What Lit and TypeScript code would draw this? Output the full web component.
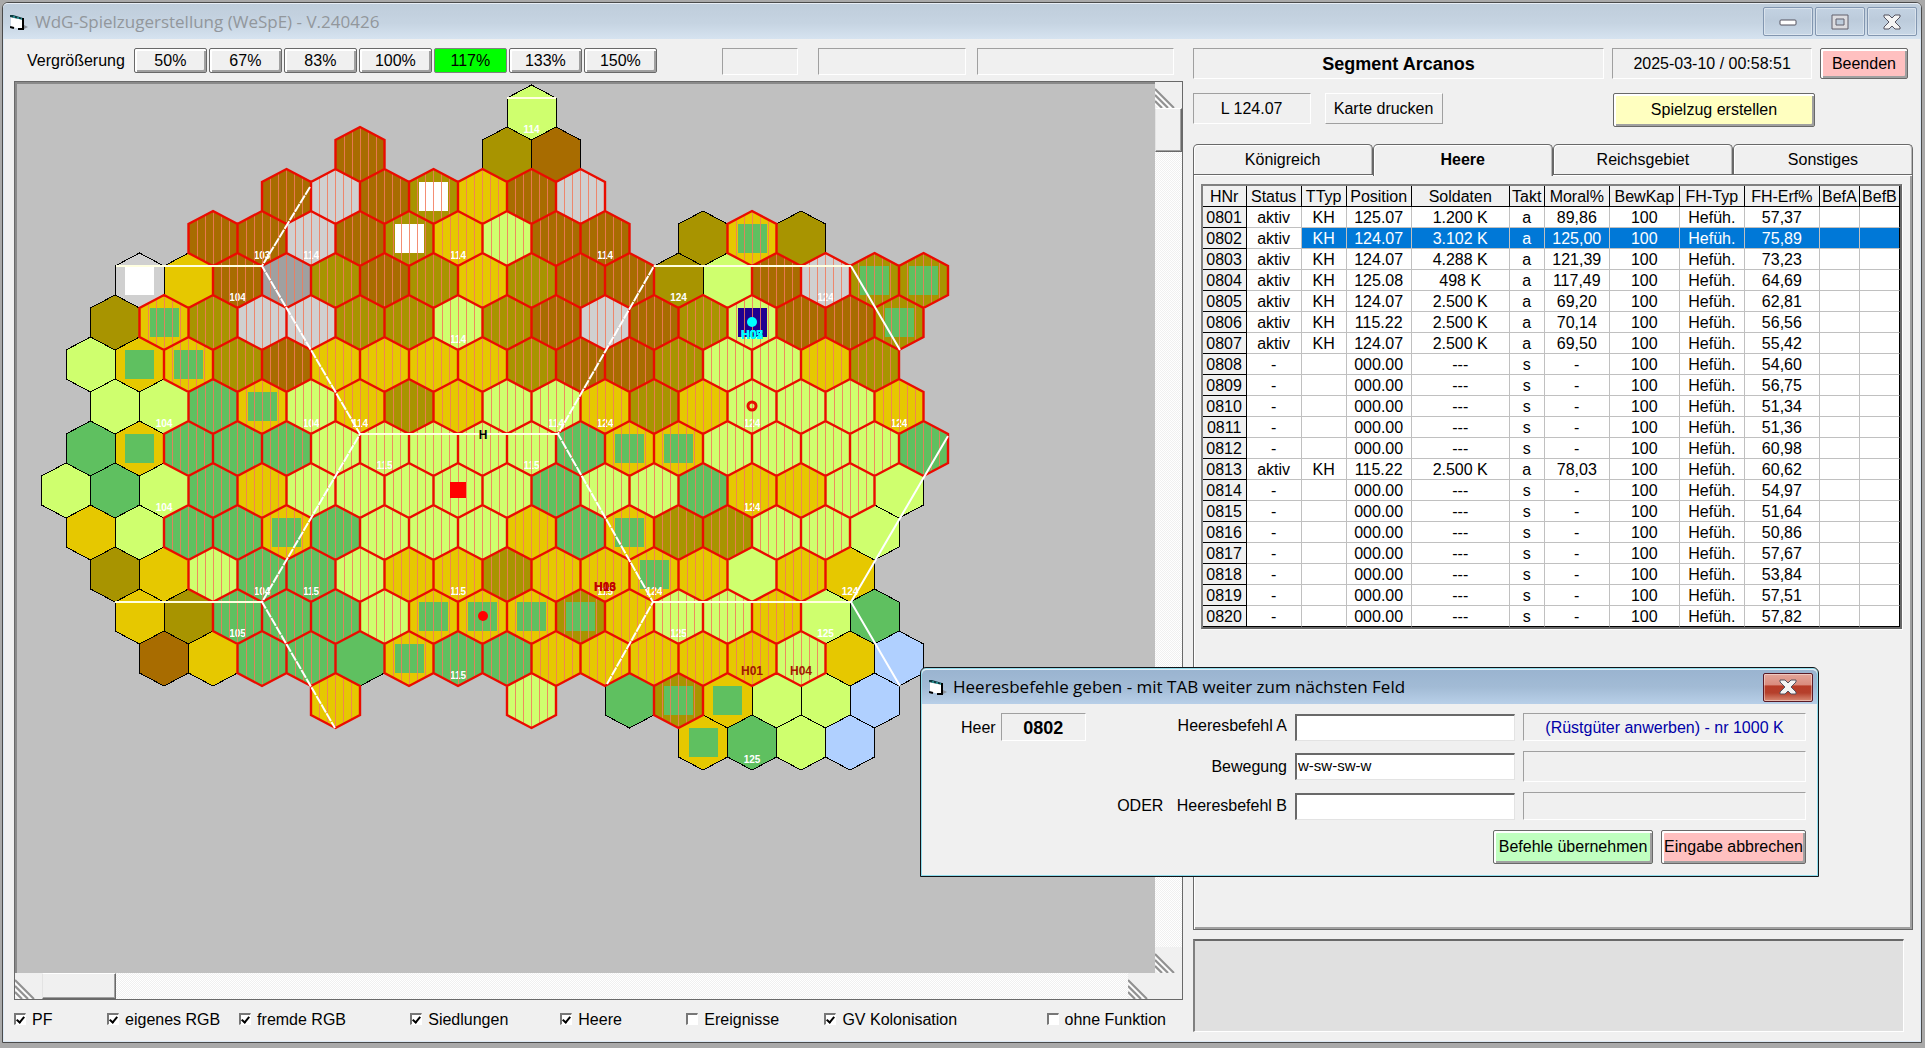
import { LitElement, html, css, svg, nothing } from "lit";
import { customElement, state } from "lit/decorators.js";
import { classMap } from "lit/directives/class-map.js";

/* ---------- shared look of the classic desktop controls ---------- */

const controls = css`
  * {
    box-sizing: border-box;
  }
  button,
  input {
    font: inherit;
    color: inherit;
    margin: 0;
  }
  .btn {
    border: 1px solid #696969;
    border-radius: 2px;
    background: #f0f0f0;
    box-shadow: inset 2px 2px 0 #fff, inset -2px -2px 0 #a0a0a0;
    padding: 0;
    text-align: center;
    white-space: nowrap;
  }
  .btn.on {
    background: #00ff00;
    box-shadow: none;
    border-color: #808080;
    padding-top: 1px;
  }
  .btn.red {
    background: #ffc0c0;
  }
  .btn.yellow {
    background: #ffffc0;
  }
  .btn.green {
    background: #c0ffc0;
  }
  .panel {
    display: flex;
    align-items: center;
    justify-content: center;
    border: 1px solid;
    border-color: #a0a0a0 #fff #fff #a0a0a0;
    white-space: nowrap;
  }
  .caption {
    width: 50px;
    height: 29px;
    padding: 0;
    border: 1px solid #8296b0;
    border-radius: 2px;
    background: linear-gradient(#c3d2e2, #bccbdb 45%, #c8d7e6);
    box-shadow: inset 0 0 0 1px rgba(255, 255, 255, 0.4);
    display: flex;
    align-items: center;
    justify-content: center;
  }
  .caption.close {
    border-color: #5a1a26;
    background: linear-gradient(#e3a69a, #d98a7c 42%, #b83c28 43%, #b5402c 70%, #d98a74);
  }
  .titletext {
    font-family: "Open Sans", "Noto Sans", sans-serif;
    font-size: 17px;
    font-weight: 400;
    margin: 0;
    white-space: nowrap;
  }
`;

const formIcon = svg`
  <svg width="18" height="16" viewBox="0 0 18 16" aria-hidden="true">
    <path d="M1 2 L4 2 L14 5 L14 15 L11 15 L1 13 Z" fill="#fff"/>
    <path d="M0 1 L3 1 L13 4 V6 L9 5 L4 4 L0 3 Z" fill="#0c3b40"/>
    <path d="M3 3 H5 M7 4 H9 M11 5 H12" stroke="#40d0d0" stroke-width="1"/>
    <path d="M13 4 V15 M0 13 L4 14 M8 15 H14" stroke="#000" stroke-width="2" fill="none"/>
    <path d="M14 11 L18 13 L14 15 Z" fill="#8a9098"/>
  </svg>`;

const crossIcon = svg`
  <svg width="20" height="18" viewBox="0 0 20 18" aria-hidden="true">
    <path d="M2 2 H7 L10 5 L13 2 H18 V4 L13 9 L18 14 V16 H13 L10 13 L7 16 H2 V14 L7 9 L2 4 Z"
      fill="#f4f4f4" stroke="#55535f" stroke-width="1"/>
  </svg>`;

/* ---------- map ---------- */

const TERRAIN: Record<string, string> = {
  b: "#a86c00",
  o: "#a89400",
  y: "#e6c800",
  l: "#cfff6e",
  g: "#5fc060",
  s: "#d0d0d0",
  d: "#a0a0a0",
  w: "#b0d0ff",
};

/* One line per row: "column terrain marker", capital terrain = own territory.
   Markers: + forest settlement, = white, # capital. */
const ROWS = [
  "19l",
  "12B 18o 20b",
  "9B 11S 13B 15O= 17Y 19B 21S",
  "6B 8B 10S 12B 14O= 16Y 18L 20B 22B 26o 28Y+ 30o",
  "3s= 5y 7B 9D 11O 13B 15O 17Y 19O 21B 23B 25o 27l 29B 31S 33O+ 35O+",
  "2o 4Y+ 6O 8S 10S 12O 14O 16L 18O 20B 22S 24B 26O 28L# 30B 32B 34O+",
  "1l 3y+ 5Y+ 7O 9B 11Y 13Y 15Y 17Y 19O 21B 23B 25O 27L 29L 31Y 33O",
  "2l 4l 6G 8Y+ 10L 12Y 14O 16Y 18L 20L 22Y 24O 26Y 28L 30L 32L 34Y",
  "1g 3y+ 5G 7G 9G 11L 13L 15L 17L 19L 21G 23Y+ 25Y+ 27L 29L 31L 33L 35G",
  "0l 2g 4l 6G 8Y 10L 12L 14L 16L 18L 20G 22L 24L 26G 28Y 30Y 32L 34l",
  "1y 3l 5G 7G 9Y+ 11G 13L 15L 17L 19Y 21G 23Y+ 25O 27O 29L 31L 33l",
  "2o 4y 6L 8G 10G 12L 14Y 16Y 18O 20Y 22Y 24Y+ 26Y 28l 30Y 32y",
  "3y 5o 7G 9G 11G 13L 15Y+ 17Y+ 19Y+ 21O+ 23Y 25L 27L 29Y 31l 33g",
  "4b 6y 8G 10G 12g 14Y+ 16G 18G 20Y 22Y 24Y 26Y 28Y 30L 32y 34w",
  "11Y 19L 23g 25O+ 27y+ 29l 31l 33w",
  "26y+ 28g 30l 32w",
];

const LABELS: [number, number, string][] = [
  [0, 19, "114"], [3, 8, "103"], [3, 10, "114"], [3, 16, "114"], [3, 22, "114"],
  [4, 7, "104"], [4, 25, "124"], [4, 31, "124"], [5, 16, "114"],
  [7, 4, "104"], [7, 10, "104"], [7, 12, "114"], [7, 20, "114"], [7, 22, "124"],
  [7, 28, "124"], [7, 34, "124"], [8, 13, "115"], [8, 19, "115"],
  [9, 4, "104"], [9, 28, "124"],
  [11, 8, "104"], [11, 10, "115"], [11, 16, "115"], [11, 22, "115"], [11, 24, "124"], [11, 32, "124"],
  [12, 7, "105"], [12, 25, "125"], [12, 31, "125"], [13, 16, "115"], [15, 28, "125"],
];

const ARMIES: [number, number, string, string][] = [
  [11, 22, "H06", "#c00000"], [11, 22, "H13", "#c00000"],
  [13, 28, "H01", "#a01800"], [13, 30, "H04", "#a01800"],
  [5, 28, "H02", "#00ffff"], [5, 28, "H03", "#00ffff"], [5, 28, "H05", "#00ffff"], [5, 28, "H07", "#00ffff"],
];

const cxOf = (h: number) => 66 + 24.5 * h;
const cyOf = (r: number) => 112 + 42 * r;

interface Hex {
  x: number;
  y: number;
  fill: string;
  own: boolean;
  mark: string;
}

const HEXES: Hex[] = ROWS.flatMap((line, r) =>
  line.split(" ").map((cell) => {
    const [, col, t, mark] = /^(\d+)([a-zA-Z])(.?)$/.exec(cell)!;
    return {
      x: cxOf(Number(col)),
      y: cyOf(r),
      fill: TERRAIN[t.toLowerCase()],
      own: t !== t.toLowerCase(),
      mark,
    };
  })
);

const outline = ({ x, y }: Hex) =>
  `M${x} ${y - 27}L${x + 24.5} ${y - 14}V${y + 15}L${x} ${y + 28}L${x - 24.5} ${y + 15}V${y - 14}Z`;

const MARKS: Record<string, string> = { "+": "#5fc060", "=": "#ffffff", "#": "#200090" };

@customElement("hex-map")
class HexMap extends LitElement {
  static styles = css`
    :host {
      display: block;
      overflow: hidden;
      background: #c0c0c0;
      min-width: 0;
      min-height: 0;
      contain: size;
    }
    svg {
      display: block;
    }
    text {
      font-family: "Liberation Sans", Arial, sans-serif;
      font-weight: 700;
      text-anchor: middle;
    }
    .seg {
      font-size: 10px;
      fill: #fff;
    }
    .army {
      font-size: 12px;
    }
  `;

  render() {
    const own = HEXES.filter((h) => h.own);
    const other = HEXES.filter((h) => !h.own);
    return html`
      <svg width="960" height="760" viewBox="17 84 960 760" role="img" aria-label="Karte">
        <g shape-rendering="crispEdges">
          ${HEXES.map((h) => svg`<path d=${outline(h)} fill=${h.fill}/>`)}
          ${HEXES.filter((h) => h.mark).map(
            (h) => svg`<rect x=${Math.floor(h.x) - 14} y=${h.y - 14} width="29" height="29" fill=${MARKS[h.mark]}/>`
          )}
        </g>
        ${LABELS.map(([r, c, t]) => svg`<text class="seg" x=${cxOf(c)} y=${cyOf(r) + 21}>${t}</text>`)}
        <g fill="none">
          <path
            d=${own
              .map((h) =>
                [-16, -8, 0, 8, 16]
                  .map((o) => {
                    const cut = Math.round(Math.abs(o) * 0.53);
                    return `M${Math.floor(h.x) + o + 0.5} ${h.y - 27 + cut}V${h.y + 28 - cut}`;
                  })
                  .join("")
              )
              .join("")}
            stroke="#f27a5c"
            stroke-opacity="0.85"
          />
          <path d=${other.map(outline).join("")} stroke="#000" shape-rendering="crispEdges" />
          <path d=${own.map(outline).join("")} stroke="#ea0c00" stroke-width="2.4" />
        </g>
        <g fill="none" stroke="#fff" stroke-width="2">
          <path
            d="M507 98H556 M116 266H262 M654 266H851 M360 434H558 M115 602H262 M653 602H851"
            stroke="#ffffe0"
          />
          <path d="M310 187L262 266L360 434L262 602L335 728" stroke-dasharray="9 1" />
          <path d="M607 684L653 602L558 434L654 266" stroke-dasharray="9 1" />
          <path d="M851 266L900 350 M948 436L851 602L900 686" />
        </g>
        <text class="army" x="483" y="439">H</text>
        <rect x="450" y="482" width="16" height="16" fill="#f00" />
        <circle cx="483" cy="616" r="5" fill="#f00" />
        <circle cx="752" cy="406" r="4" fill="none" stroke="#e61000" stroke-width="3" />
        <circle cx="752" cy="322" r="5" fill="#0ff" />
        ${ARMIES.map(
          ([r, c, t, f]) => svg`<text class="army" x=${cxOf(c)} y=${cyOf(r) + 17} fill=${f}>${t}</text>`
        )}
      </svg>
    `;
  }
}

/* ---------- army table ---------- */

const HEAD = ["HNr", "Status", "TTyp", "Position", "Soldaten", "Takt", "Moral%", "BewKap", "FH-Typ", "FH-Erf%", "BefA", "BefB"];
const WIDTHS = [44, 55, 45, 65, 98, 35, 65, 70, 65, 75, 40, 40];

const ACTIVE: Record<string, string[]> = {
  "0801": ["125.07", "1.200 K", "89,86"],
  "0802": ["124.07", "3.102 K", "125,00"],
  "0803": ["124.07", "4.288 K", "121,39"],
  "0804": ["125.08", "498 K", "117,49"],
  "0805": ["124.07", "2.500 K", "69,20"],
  "0806": ["115.22", "2.500 K", "70,14"],
  "0807": ["124.07", "2.500 K", "69,50"],
  "0813": ["115.22", "2.500 K", "78,03"],
};
const EXPERIENCE = [
  "57,37", "75,89", "73,23", "64,69", "62,81", "56,56", "55,42", "54,60", "56,75", "51,34",
  "51,36", "60,98", "60,62", "54,97", "51,64", "50,86", "57,67", "53,84", "57,51", "57,82",
];
const ARMY_ROWS = EXPERIENCE.map((erf, i) => {
  const nr = "08" + String(i + 1).padStart(2, "0");
  const a = ACTIVE[nr];
  return a
    ? [nr, "aktiv", "KH", a[0], a[1], "a", a[2], "100", "Hefüh.", erf, "", ""]
    : [nr, "-", "", "000.00", "---", "s", "-", "100", "Hefüh.", erf, "", ""];
});

@customElement("army-table")
class ArmyTable extends LitElement {
  @state() private selected = "0802";

  static styles = css`
    :host {
      display: block;
      border: 2px solid;
      border-color: #808080 #696969 #696969 #808080;
      box-shadow: 1px 1px 0 #fff;
    }
    table {
      width: 100%;
      table-layout: fixed;
      border-collapse: separate;
      border-spacing: 0;
      background: #fff;
    }
    th,
    td {
      box-sizing: border-box;
      height: 21px;
      padding: 2px 0 0;
      line-height: 18px;
      text-align: center;
      font-weight: 400;
      white-space: nowrap;
      border-right: 1px solid #c0c0c0;
      border-bottom: 1px solid #c0c0c0;
    }
    th {
      background: #f0f0f0;
      border-color: #000;
    }
    tr:last-child td {
      border-bottom-color: #000;
    }
    td:last-child {
      border-right-color: #000;
    }
    .sel td {
      background: #0078d7;
      color: #fff;
    }
    .sel td.status {
      background: #fff;
      color: #000;
    }
  `;

  render() {
    return html`
      <table>
        <colgroup>
          ${WIDTHS.map((w) => html`<col style="width:${(w / 697) * 100}%" />`)}
        </colgroup>
        <thead>
          <tr>
            ${HEAD.map((h) => html`<th scope="col">${h}</th>`)}
          </tr>
        </thead>
        <tbody>
          ${ARMY_ROWS.map(
            (row) => html`<tr
              class=${classMap({ sel: row[0] === this.selected })}
              @click=${() => (this.selected = row[0])}
            >
              ${row.map((c, i) =>
                i === 0
                  ? html`<th scope="row">${c}</th>`
                  : html`<td class=${i === 1 ? "status" : ""}>${c}</td>`
              )}
            </tr>`
          )}
        </tbody>
      </table>
    `;
  }
}

/* ---------- order dialog ---------- */

@customElement("order-dialog")
class OrderDialog extends LitElement {
  static styles = [
    controls,
    css`
      :host {
        display: block;
        border: 1px solid #101418;
        border-radius: 6px 6px 0 0;
        background: #f0f0f0;
        box-shadow: inset 0 0 0 1px #8fdcec;
        padding: 1px;
      }
      header {
        display: flex;
        align-items: center;
        gap: 6px;
        height: 35px;
        padding: 0 4px 0 7px;
        border-radius: 5px 5px 0 0;
        border-top: 1px solid #e4eef8;
        background: linear-gradient(#9ab4d0, #a2bbd5 50%, #b8cfe8);
      }
      .titletext {
        flex: 1;
        font-size: 17px;
      }
      form {
        display: grid;
        grid-template-columns: auto 85px 1fr 220px 291px;
        grid-template-rows: 28px 31px 28px;
        row-gap: 10px;
        padding: 9px 11px 11px 39px;
        align-items: center;
      }
      .who {
        margin-right: 5px;
        padding-top: 2px;
      }
      .nr {
        height: 28px;
        font-size: 18px;
        font-weight: 700;
        padding-top: 2px;
      }
      .name {
        grid-column: 3;
        justify-self: end;
        padding-right: 8px;
        white-space: pre;
      }
      .name.a {
        padding-bottom: 2px;
      }
      .text {
        grid-column: 4;
        width: 100%;
        height: 27px;
        border: 2px solid;
        border-color: #696969 #e3e3e3 #e3e3e3 #696969;
        border-width: 2px 1px 1px 2px;
        background: #fff;
        padding: 0 1px 3px;
        font-size: 15px;
        outline: none;
        border-radius: 0;
      }
      .hint {
        align-self: stretch;
        margin-left: 8px;
        padding-top: 1px;
        color: #0000a8;
      }
      .actions {
        grid-column: 1 / -1;
        display: flex;
        justify-content: flex-end;
        gap: 8px;
      }
      .actions .btn {
        height: 34px;
      }
      .ok {
        width: 160px;
      }
      .cancel {
        width: 145px;
      }
    `,
  ];

  render() {
    return html`
      <header>
        ${formIcon}
        <h2 class="titletext">Heeresbefehle geben - mit TAB weiter zum nächsten Feld</h2>
        <button class="caption close" aria-label="Schließen">${crossIcon}</button>
      </header>
      <form @submit=${(e: Event) => e.preventDefault()}>
        <span class="who">Heer</span>
        <span class="panel nr">0802</span>
        <label class="name a" for="a">Heeresbefehl A</label>
        <input class="text" id="a" type="text" />
        <span class="panel hint">(Rüstgüter anwerben) - nr 1000 K</span>
        <label class="name" for="m">Bewegung</label>
        <input class="text" id="m" type="text" .value=${"w-sw-sw-w"} />
        <span class="panel hint"></span>
        <label class="name" for="b">ODER&nbsp; &nbsp;Heeresbefehl B</label>
        <input class="text" id="b" type="text" />
        <span class="panel hint"></span>
        <div class="actions">
          <button class="btn green ok">Befehle übernehmen</button>
          <button class="btn red cancel" type="button">Eingabe abbrechen</button>
        </div>
      </form>
    `;
  }
}

/* ---------- main window ---------- */

const ZOOMS = ["50%", "67%", "83%", "100%", "117%", "133%", "150%"];
const TABS = ["Königreich", "Heere", "Reichsgebiet", "Sonstiges"];
const LAYERS: [string, boolean][] = [
  ["PF", true],
  ["eigenes RGB", true],
  ["fremde RGB", true],
  ["Siedlungen", true],
  ["Heere", true],
  ["Ereignisse", false],
  ["GV Kolonisation", true],
  ["ohne Funktion", false],
];

const hatch = svg`
  <svg width="20" height="20" viewBox="0 0 20 20" aria-hidden="true">
    <path d="M0 1L19 20M0 7L13 20M0 13L7 20" stroke="#909090" stroke-width="2" fill="none"/>
    <path d="M0 4L16 20M0 10L10 20M0 16L4 20" stroke="#fff" stroke-width="1" fill="none"/>
  </svg>`;

@customElement("app-root")
class AppRoot extends LitElement {
  @state() private zoom = "117%";
  @state() private tab = "Heere";

  static styles = [
    controls,
    css`
      :host {
        display: block;
        position: relative;
        height: 100vh;
        min-height: 900px;
        box-sizing: border-box;
        padding: 2px 3px 5px 2px;
        background: #a9a9a9;
        font: 16px/20px "Liberation Sans", Arial, sans-serif;
        color: #000;
        overflow: hidden;
      }
      .window {
        height: 100%;
        display: flex;
        flex-direction: column;
        border: 1px solid #4a4a4a;
        border-radius: 6px 6px 0 0;
        background: #f0f0f0;
        box-shadow: inset 0 0 0 1px #dce8f4;
      }
      .titlebar {
        display: flex;
        align-items: center;
        gap: 7px;
        height: 36px;
        padding: 0 4px 0 7px;
        border-radius: 5px 5px 0 0;
        border-top: 1px solid #e8eef6;
        background: linear-gradient(#bfcddb, #c6d4e2 55%, #d6e3f0);
      }
      .titletext {
        flex: 1;
        color: #92979c;
      }
      .captions {
        display: flex;
        gap: 2px;
      }
      .body {
        flex: 1;
        min-height: 0;
        display: grid;
        grid-template-columns: 1168fr 720fr;
        gap: 10px;
        padding: 9px 8px 10px 11px;
      }
      .left,
      .right {
        display: flex;
        flex-direction: column;
        min-width: 0;
        min-height: 0;
      }
      .tools {
        display: flex;
        align-items: flex-start;
        height: 33px;
      }
      .tools .word {
        margin: 3px 9px 0 13px;
      }
      .zooms {
        display: flex;
        gap: 2px;
      }
      .zooms .btn {
        width: 73px;
        height: 25px;
      }
      .readouts {
        flex: 1;
        display: grid;
        grid-template-columns: 85fr 148fr 196fr;
        column-gap: 11px;
        height: 27px;
        margin: 0 9px 0 65px;
      }
      .readouts .panel:first-child {
        margin-right: 9px;
      }
      .mapframe {
        flex: 1;
        min-height: 0;
        display: grid;
        grid-template-columns: 1fr 27px;
        grid-template-rows: 1fr 26px;
        border: 1px solid #696969;
      }
      .mapframe hex-map {
        border: 2px solid;
        border-color: #8a8a8a #c0c0c0 #c0c0c0 #8a8a8a;
        border-width: 2px 0 0 2px;
      }
      .bar {
        display: flex;
        background: repeating-conic-gradient(#f0f0f0 0 25%, #fff 0 50%) 0 0 / 2px 2px;
      }
      .bar.v {
        flex-direction: column;
      }
      .end {
        flex: none;
        width: 27px;
        height: 26px;
        background: #f0f0f0;
        display: flex;
        align-items: flex-end;
      }
      .thumb {
        flex: none;
        background: #f0f0f0;
        border: 1px solid;
        border-color: #fff #696969 #696969 #e3e3e3;
        box-shadow: inset -1px -1px 0 #a0a0a0;
      }
      .v .thumb {
        height: 44px;
      }
      .h .thumb {
        width: 74px;
      }
      .gap {
        flex: 1;
      }
      .corner {
        background: #f0f0f0;
      }
      .layers {
        display: grid;
        grid-template-columns: 93fr 132fr 171fr 150fr 126fr 138fr 222fr 136fr;
        margin-top: 8px;
        height: 24px;
      }
      .layers label {
        display: flex;
        align-items: center;
        gap: 6px;
        min-width: 0;
        white-space: nowrap;
      }
      .layers input {
        appearance: none;
        position: relative;
        flex: none;
        width: 12px;
        height: 12px;
        border: 1px solid;
        border-width: 2px 1px 1px 2px;
        border-color: #777 #fff #fff #777;
        background: #fff;
        margin-bottom: 3px;
      }
      .layers input:checked::after {
        content: "";
        position: absolute;
        left: 2px;
        top: 0;
        width: 3px;
        height: 6px;
        border: solid #000;
        border-width: 0 2px 2px 0;
        transform: rotate(40deg);
      }
      .head {
        display: grid;
        grid-template-columns: 411fr 199fr 88fr;
        column-gap: 8px;
        height: 31px;
        margin-right: 5px;
      }
      .segment {
        font-size: 18px;
        font-weight: 700;
      }
      .sub {
        display: flex;
        align-items: flex-start;
        height: 51px;
        margin-top: 14px;
        padding-right: 98px;
      }
      .sub .panel,
      .sub .print {
        width: 118px;
        height: 31px;
        padding-top: 1px;
      }
      .sub .print {
        margin-left: 14px;
        border: 1px solid;
        border-color: #fff #a0a0a0 #a0a0a0 #fff;
        background: #f0f0f0;
        padding: 1px 0 0;
      }
      .sub .create {
        margin-left: auto;
        width: 202px;
        height: 34px;
      }
      .tabs {
        display: grid;
        grid-template-columns: repeat(4, 1fr);
      }
      .tab {
        height: 30px;
        padding: 0;
        border: 1px solid #696969;
        border-bottom: 0;
        border-radius: 5px 5px 0 0;
        background: #f0f0f0;
        box-shadow: inset 1px 1px 0 #fff, inset -1px 0 0 #b8b8b8;
      }
      .tab.on {
        font-weight: 700;
        height: 32px;
        margin-bottom: -2px;
        padding-bottom: 2px;
        position: relative;
      }
      .page {
        flex: 1;
        min-height: 0;
        border: 1px solid #696969;
        box-shadow: inset 1px 1px 0 #fff, inset -2px -2px 0 #a0a0a0;
        padding: 9px 10px 9px 7px;
      }
      .message {
        height: 93px;
        margin: 9px 9px 0 0;
        border: 1px solid;
        border-width: 2px 1px 1px 2px;
        border-color: #696969 #fff #fff #808080;
        background: #e0e0e0;
      }
      order-dialog {
        position: absolute;
        left: 920px;
        top: 667px;
        width: 899px;
      }
    `,
  ];

  render() {
    return html`
      <div class="window">
        <header class="titlebar">
          ${formIcon}
          <h1 class="titletext">WdG-Spielzugerstellung (WeSpE) - V.240426</h1>
          <div class="captions">
            <button class="caption" aria-label="Minimieren">
              <svg width="18" height="8" viewBox="0 0 18 8" aria-hidden="true">
                <rect x="1" y="2" width="16" height="5" rx="1" fill="#fff" stroke="#55535f" />
              </svg>
            </button>
            <button class="caption" aria-label="Maximieren">
              <svg width="18" height="16" viewBox="0 0 18 16" aria-hidden="true">
                <path
                  d="M1 1H17V15H1ZM5 5V11H13V5Z"
                  fill="#dcdce0"
                  fill-rule="evenodd"
                  stroke="#62606c"
                />
              </svg>
            </button>
            <button class="caption" aria-label="Schließen">${crossIcon}</button>
          </div>
        </header>
        <main class="body">
          <section class="left">
            <div class="tools">
              <span class="word">Vergrößerung</span>
              <div class="zooms">
                ${ZOOMS.map(
                  (z) => html`<button
                    class=${classMap({ btn: true, on: z === this.zoom })}
                    @click=${() => (this.zoom = z)}
                  >
                    ${z}
                  </button>`
                )}
              </div>
              <div class="readouts">
                <span class="panel"></span><span class="panel"></span><span class="panel"></span>
              </div>
            </div>
            <div class="mapframe">
              <hex-map></hex-map>
              <div class="bar v">
                <span class="end">${hatch}</span><span class="thumb"></span><span class="gap"></span
                ><span class="end">${hatch}</span>
              </div>
              <div class="bar h">
                <span class="end">${hatch}</span><span class="thumb"></span><span class="gap"></span
                ><span class="end">${hatch}</span>
              </div>
              <div class="corner"></div>
            </div>
            <div class="layers">
              ${LAYERS.map(
                ([name, on]) => html`<label><input type="checkbox" ?checked=${on} />${name}</label>`
              )}
            </div>
          </section>
          <section class="right">
            <div class="head">
              <span class="panel segment">Segment Arcanos</span>
              <span class="panel">2025-03-10 / 00:58:51</span>
              <button class="btn red">Beenden</button>
            </div>
            <div class="sub">
              <span class="panel">L 124.07</span>
              <button class="print">Karte drucken</button>
              <button class="btn yellow create">Spielzug erstellen</button>
            </div>
            <div class="tabs" role="tablist">
              ${TABS.map(
                (t) => html`<button
                  role="tab"
                  aria-selected=${t === this.tab}
                  class=${classMap({ tab: true, on: t === this.tab })}
                  @click=${() => (this.tab = t)}
                >
                  ${t}
                </button>`
              )}
            </div>
            <div class="page">${this.tab === "Heere" ? html`<army-table></army-table>` : nothing}</div>
            <div class="message"></div>
          </section>
        </main>
      </div>
      <order-dialog></order-dialog>
    `;
  }
}
